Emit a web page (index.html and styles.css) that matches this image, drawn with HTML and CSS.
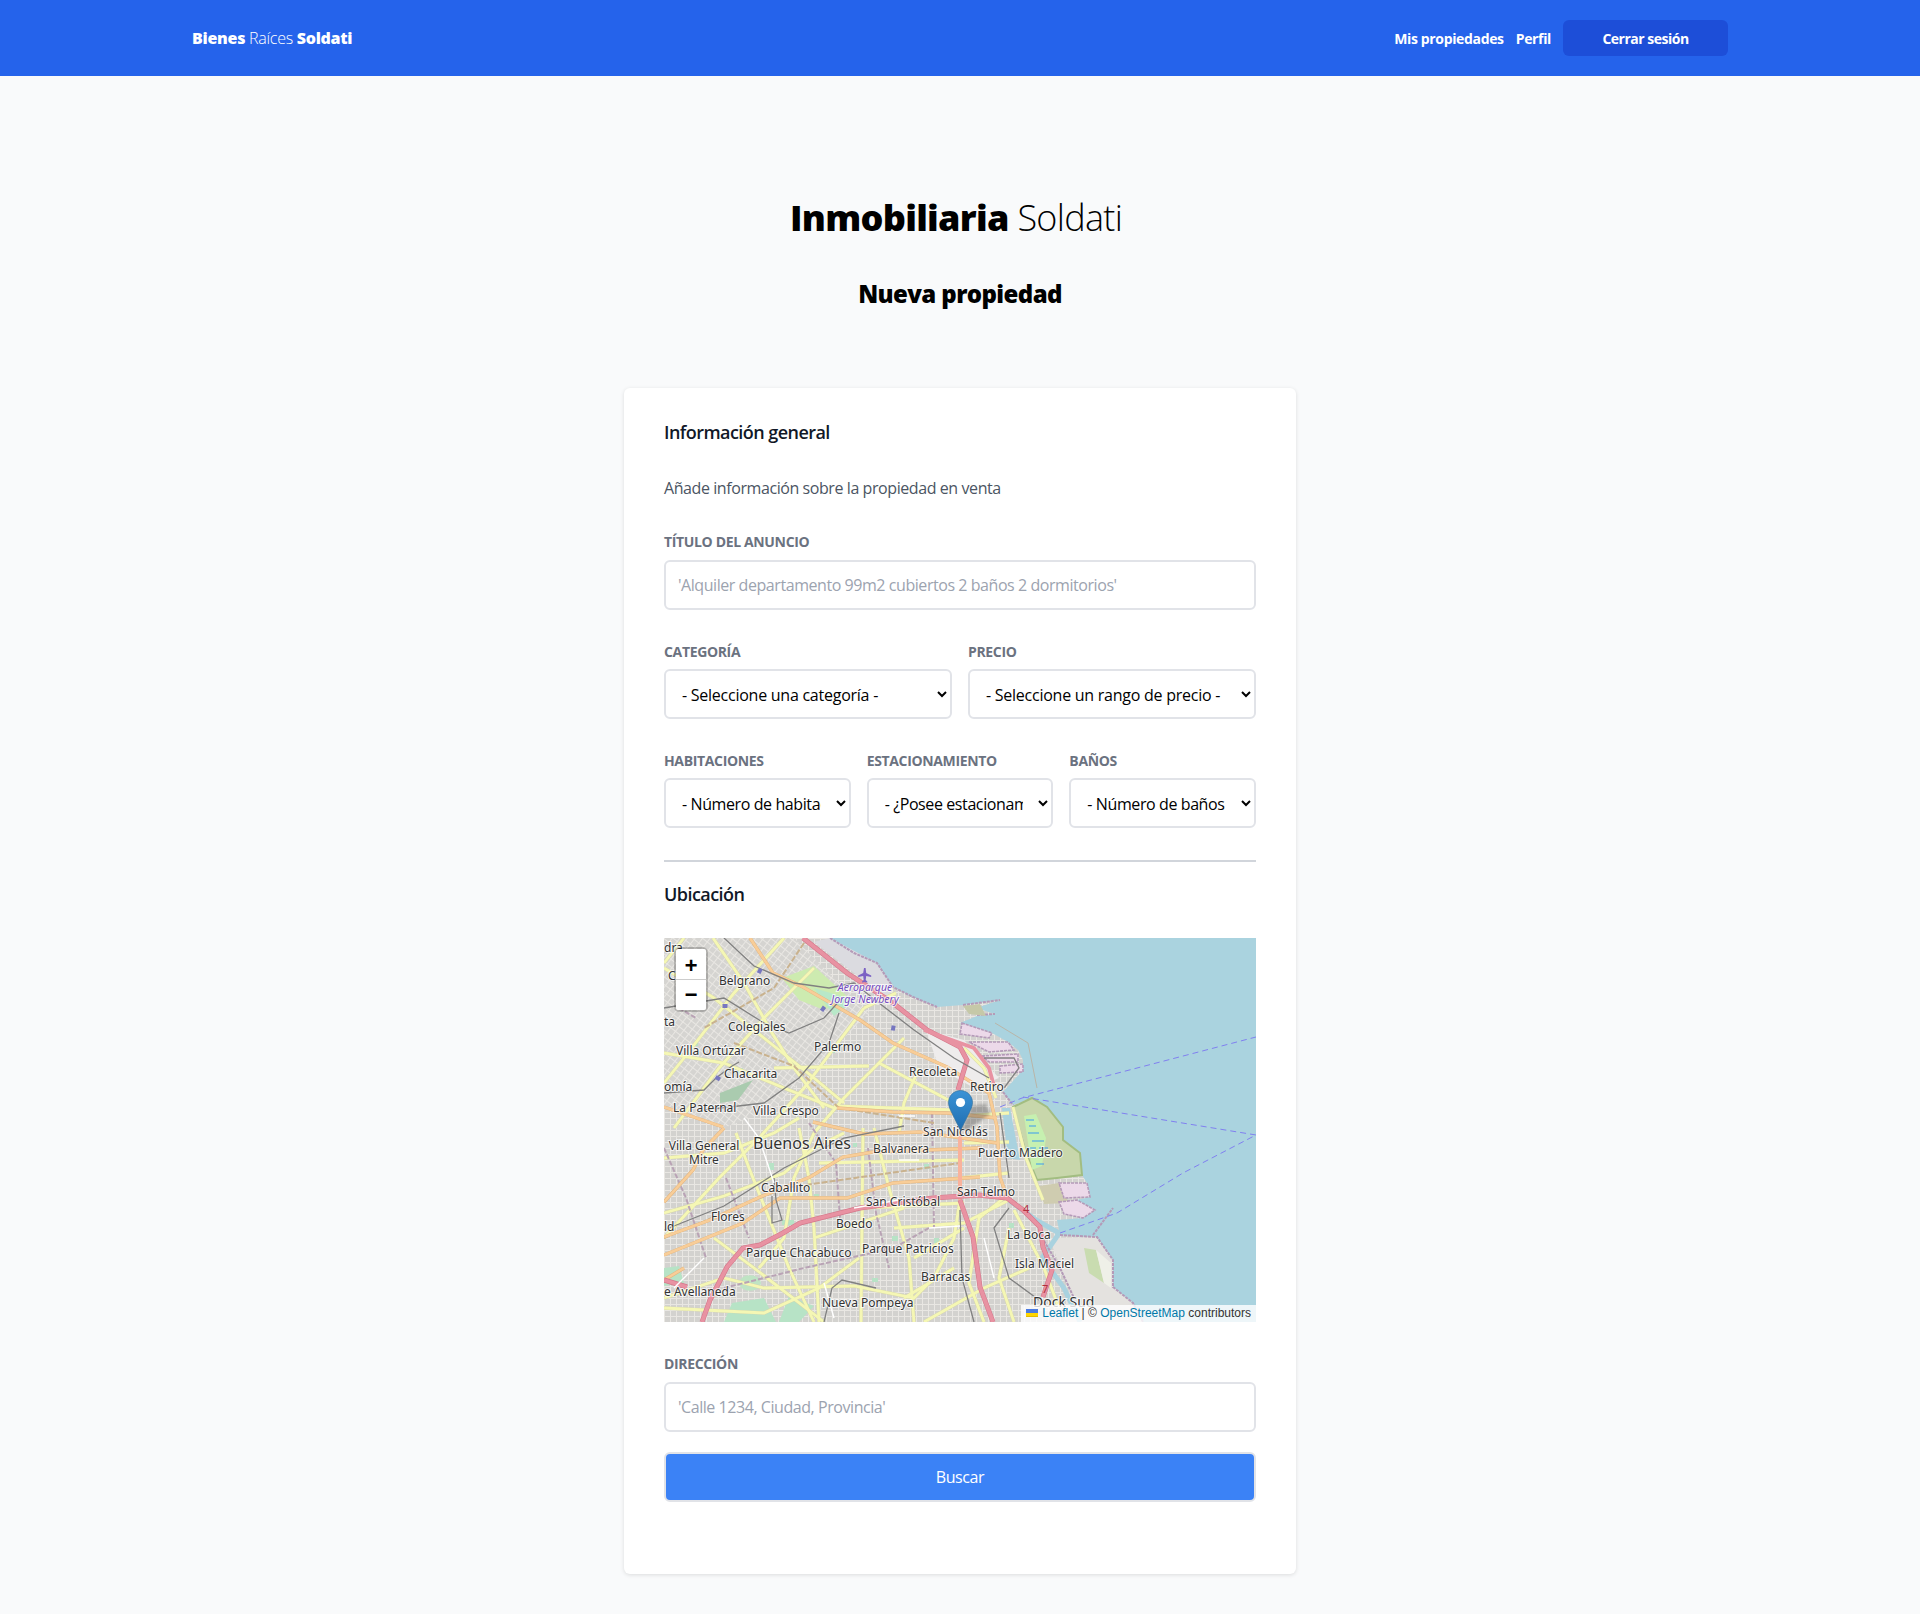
FILE: index.html
```html
<!DOCTYPE html>
<html lang="es">
<head>
  <meta charset="UTF-8">
  <title>Nueva propiedad</title>
  <link rel="stylesheet" href="styles.css">
</head>
<body>
  <header class="topbar">
    <a class="logo" href="#"><b>Bienes</b> Raíces <b>Soldati</b></a>
    <nav class="nav">
      <a href="#">Mis propiedades</a>
      <a href="#">Perfil</a>
      <a class="logout" href="#">Cerrar sesión</a>
    </nav>
  </header>

  <main class="page">
    <h1 class="title"><b>Inmobiliaria</b> Soldati</h1>
    <h2 class="subtitle">Nueva propiedad</h2>

    <form class="card">
      <h3 class="heading">Información general</h3>
      <p class="intro">Añade información sobre la propiedad en venta</p>

      <div class="field first">
        <label>Título del anuncio</label>
        <input type="text" placeholder="'Alquiler departamento 99m2 cubiertos 2 baños 2 dormitorios'">
      </div>

      <div class="row two">
        <div class="field">
          <label>Categoría</label>
          <select><option>- Seleccione una categoría -</option></select>
        </div>
        <div class="field">
          <label>Precio</label>
          <select><option>- Seleccione un rango de precio -</option></select>
        </div>
      </div>

      <div class="row three">
        <div class="field">
          <label>Habitaciones</label>
          <select><option>- Número de habitaciones -</option></select>
        </div>
        <div class="field">
          <label>Estacionamiento</label>
          <select><option>- ¿Posee estacionamiento? -</option></select>
        </div>
        <div class="field">
          <label>Baños</label>
          <select><option>- Número de baños -</option></select>
        </div>
      </div>

      <hr class="divider">
      <h3 class="heading">Ubicación</h3>

      <div class="map">
        <svg class="tiles" viewBox="0 0 592 384" width="592" height="384">
          <defs>
            <pattern id="grid" width="6" height="6" patternUnits="userSpaceOnUse">
              <rect width="6" height="6" fill="#d3d2cf"/>
              <path d="M0 .5H6M.5 0V6" stroke="#e9e7e3" stroke-width="1"/>
            </pattern>
            <pattern id="gridTurned" width="6" height="6" patternUnits="userSpaceOnUse" patternTransform="rotate(38)">
              <rect width="6" height="6" fill="#d5d4d1"/>
              <path d="M0 .5H6M.5 0V6" stroke="#e9e7e3" stroke-width="1"/>
            </pattern>
            <filter id="soft"><feGaussianBlur stdDeviation="1.8"/></filter>
            <filter id="tileBlur" x="0" y="0" width="100%" height="100%"><feGaussianBlur stdDeviation=".35"/></filter>
            <g id="yellowRoads">
              <path d="M49 0L80 45L108 95L130 130L160 170"/>
              <path d="M0 30L50 60L100 100L150 140L180 165"/>
              <path d="M20 0L0 25"/>
              <path d="M120 0L70 55L20 120L0 145"/>
              <path d="M150 30L100 80L55 130L10 190"/>
              <path d="M200 70L140 150L95 200L55 240L0 300"/>
              <path d="M240 100L180 160L150 195"/>
              <path d="M110 130L205 128"/>
              <path d="M0 115L60 125L120 150L170 170"/>
              <path d="M215 125L290 165"/>
              <path d="M255 130L240 165L235 195"/>
              <path d="M200 70L232 55"/>
              <path d="M170 168L290 172"/>
              <path d="M199 190L197 384"/>
              <path d="M0 275L60 258L120 235L150 210L180 195"/>
              <path d="M72 195L85 230L105 280L125 330L150 384"/>
              <path d="M135 190L145 240L150 290L155 384"/>
              <path d="M210 190L225 250L245 320L250 384"/>
              <path d="M296 262L290 300L270 340L250 360L190 348L100 350L60 340L0 360"/>
              <path d="M150 300L240 270"/>
              <path d="M0 370L100 375L155 350L195 320"/>
              <path d="M50 300L90 330L160 384"/>
              <path d="M199 270L300 265"/>
              <path d="M0 220L60 215L110 195L135 180"/>
              <path d="M150 195L130 240L120 300L95 330"/>
              <path d="M230 290L300 285L345 262"/>
              <path d="M340 260L315 280L305 345L320 384"/>
              <path d="M345 290L335 340L350 384"/>
              <path d="M350 272L380 330L395 370"/>
              <path d="M300 178L345 175"/>
              <path d="M300 205L345 204"/>
              <path d="M296 240L345 235"/>
              <path d="M349 169L362 220L379 262"/>
              <path d="M155 225L300 222"/>
              <path d="M250 320L300 290"/>
              <path d="M260 384L320 350L365 330"/>
              <path d="M240 360L290 330"/>
              <path d="M300 110L320 130L332 160"/>
            </g>
            <g id="orangeRoads">
              <path d="M86 0L109 35L139 49L196 82L229 105L283 129L325 155L333 189L336 239L343 259"/>
              <path d="M173 170L229 174L283 175L333 180"/>
              <path d="M149 184L200 196L256 194L333 205"/>
              <path d="M0 299L46 282L96 259L146 239L179 219L209 214L316 210"/>
              <path d="M0 317L79 285L116 260L183 260L229 245L316 239"/>
              <path d="M0 264L29 232L39 212L60 190"/>
              <path d="M0 169L59 189"/>
              <path d="M0 342L20 330"/>
            </g>
          </defs>

          <g filter="url(#tileBlur)">
            <rect width="592" height="384" fill="#aad3df"/>
            <path class="land" fill="url(#grid)" d="M0 0H166L190 15L213 25L229 49L249 59L273 69L299 67L336 62L312 70L331 76L313 78L296 85L328 95L344 104L354 112L359 122L359 132L339 154L349 167L368 160L383 169L399 189L399 202L416 215L418 237L423 245L426 259L413 262L431 272L419 280L393 282L396 297L433 299L449 322L449 349L469 365L479 384H0Z"/>
            <path fill="url(#gridTurned)" d="M0 0H130L205 75L110 170L60 190L0 170Z"/>
            <!-- parks, airport, port -->
            <path fill="#dbdbe0" d="M166 0L213 25L229 49L224 60L190 35L150 4Z"/>
            <path fill="#cdebb0" d="M118 40L150 28L185 60L160 72L135 62Z"/>
            <path fill="#b8e8c8" d="M150 50L190 62L170 78Z"/>
            <path fill="#aacbaf" d="M56 155L89 142L74 162L56 165Z"/>
            <path class="dock" d="M298 85L328 95L325 100L296 96ZM305 104L344 104L350 112L325 114ZM318 118L354 116L354 124L325 124ZM336 128L359 126L359 134L336 135Z"/>
            <path class="pier" d="M299 67L336 62M313 77L331 76"/>
            <path fill="#c5c8a8" d="M299 68L316 66L322 78L305 76Z"/>
            <path fill="#eeecec" d="M262 92L300 102L335 140L310 150L275 130Z"/>
            <path fill="#c8d7ab" stroke="#a2bd81" stroke-width="2" d="M349 169L368 160L383 169L399 189L399 202L416 215L418 237L393 240L373 242L362 215Z"/>
            <path fill="#c6f0b0" d="M360 178L372 176L382 200L378 228L368 232Z"/>
            <path stroke="#3a9cf0" stroke-width="1" d="M362 182H370M365 188H372M364 195H375M368 203H380M362 210H372M375 210H384M368 218H378M372 226H380"/>
            <path fill="#cfccb0" d="M375 248L395 245L405 265L380 266Z"/>
            <path class="dock" d="M395 245L423 245L426 259L400 260ZM395 264L413 262L431 272L419 280L400 276Z"/>
            <path fill="#e4e2df" d="M385 300L433 299L449 322L449 349L469 365L479 384H400L405 350Z"/>
            <path fill="#c9dcb0" d="M420 310L432 312L440 345L425 335Z"/>
            <path fill="#eff0e8" d="M432 312L447 325L447 350L440 345Z"/>
            <path fill="#a9d2df" d="M338 170L346 170L356 222L344 220Z"/>
            <path class="road" stroke="#a9d2df" stroke-width="5" d="M345 262L372 282L395 295L392 300L378 320L400 350L416 384"/>
            <path class="pier" d="M166 0L190 15L213 25L229 49L249 59L273 69M339 154L349 167M396 297L433 299L449 322L449 349L469 365L479 384M376 296L396 330L410 360M429 297L449 270"/>
            <path fill="#bfe4c4" d="M75 345a10 7 0 1 0 22 0a10 7 0 1 0 -22 0Z"/>
            <path fill="#b7e3c6" d="M0 330L15 328L20 345L0 348ZM68 365L100 360L112 384H60ZM125 358L150 368L135 384H115Z"/>
            <path fill="#b7e3c6" d="M74 130h5v5h-5zM105 225h5v7h-5zM189 205h4v4h-4zM166 110h5v5h-5zM228 298h6v5h-6zM270 300h5v5h-5zM208 340h6v4h-6zM30 104h4v4h-4zM118 282h12v5h-12zM150 256h5v5h-5zM296 340h5v4h-5zM260 226h5v5h-5zM345 285h5v5h-5z"/>

            <!-- roads, casing first -->
            <use href="#yellowRoads" class="road" stroke="#d6d6ac" stroke-width="3.6"/>
            <use href="#yellowRoads" class="road" stroke="#f5f7b4" stroke-width="2.8"/>
            <path class="road" stroke="#b9a3b5" stroke-width="2" stroke-dasharray="5 2" d="M15 70L32 80M0 210L22 260L42 320M62 240L85 300M145 185L172 225L176 280M204 210L212 275L225 330M268 175L270 290M265 290L230 310L140 330L60 350"/>
            <path class="road" stroke="#c9b28e" stroke-width="2" stroke-dasharray="6 2" d="M70 105L130 128L175 170L270 185M0 300L120 250L296 225M140 5L110 50L40 90"/>
            <use href="#orangeRoads" class="road" stroke="#e3b47c" stroke-width="3.4"/>
            <use href="#orangeRoads" class="road" stroke="#f8cd98" stroke-width="2.6"/>
            <path class="road" stroke="#f9b29c" stroke-width="4" d="M296 165L296 262"/>
            <path class="road" stroke="#d4788b" stroke-width="5" d="M0 342L23 349M314 257L269 260L196 270L136 285L119 295L96 307L79 310L63 329L46 362L38 384M314 257L343 260L359 272L376 289L379 309L388 332L379 359M296 262L309 299L316 349L329 384M139 0L183 35L229 65L263 92L296 109L303 122L294 152"/>
            <path class="road" stroke="#e892a2" stroke-width="3.8" d="M0 342L23 349M314 257L269 260L196 270L136 285L119 295L96 307L79 310L63 329L46 362L38 384M314 257L343 260L359 272L376 289L379 309L388 332L379 359M296 262L309 299L316 349L329 384M139 0L183 35L229 65L263 92L296 109L303 122L294 152M260 92L310 110L325 130L330 148"/>
            <path class="road" stroke="#808080" stroke-width="1.3" d="M60 0L90 28L130 45L165 50L190 45L215 65L250 92L290 120L325 140M0 70L60 60L100 85L125 95L160 80L178 60M0 155L40 152L52 140L68 128L75 124M40 172L100 165L135 140L165 105L175 75M0 292L60 268L120 230L180 200L240 188M110 240L112 262L118 282L108 285L108 258M296 272L298 340L310 384M336 175L345 240M320 120L350 120L355 130L340 150M160 384L168 350L178 342L212 350M345 270L330 290L345 340L375 362"/>
            <path class="road" stroke="#7777c0" stroke-width="5" stroke-dasharray="4 70" d="M94 32L127 48L172 80L246 93M61 66L60 130L42 160"/>
            <path class="road" stroke="#fff" stroke-width="1.4" d="M235 178h16M235 222h20M190 270L235 262M265 290L296 288M160 345L170 380M10 350L40 320M80 180L95 200L110 245M320 300L330 340"/>

            <!-- limits over the water -->
            <path class="road" stroke="#8080f0" stroke-dasharray="6 4" d="M336 169L358 160L592 99M359 159L592 197L519 235L453 275L396 295"/>
            <path class="road" stroke="#b9b5a8" d="M331 85L364 105L373 150"/>

            <path fill="#7b62c4" d="M200 30l1.6 0l.6 5l5 2.4l0 1.6l-5-1l-.5 4l1.6 1.6l0 1l-2.6-.6l-2.6 .6l0-1l1.6-1.6l-.5-4l-5 1l0-1.6l5-2.4Z"/>
          </g>

          <text class="lbl" x="55" y="47">Belgrano</text>
          <text class="lbl air" x="201" y="53" text-anchor="middle">Aeroparque</text>
          <text class="lbl air" x="201" y="65" text-anchor="middle">Jorge Newbery</text>
          <text class="lbl" x="64" y="93">Colegiales</text>
          <text class="lbl" x="12" y="117">Villa Ortúzar</text>
          <text class="lbl" x="150" y="113">Palermo</text>
          <text class="lbl" x="245" y="138">Recoleta</text>
          <text class="lbl" x="60" y="140">Chacarita</text>
          <text class="lbl" x="0" y="153">omía</text>
          <text class="lbl" x="9" y="174">La Paternal</text>
          <text class="lbl" x="89" y="177">Villa Crespo</text>
          <text class="lbl" x="306" y="153">Retiro</text>
          <text class="lbl" x="259" y="198">San Nicolás</text>
          <text class="lbl" x="314" y="219">Puerto Madero</text>
          <text class="lbl" x="209" y="215">Balvanera</text>
          <text class="lbl big" x="89" y="211">Buenos Aires</text>
          <text class="lbl" x="40" y="212" text-anchor="middle">Villa General</text>
          <text class="lbl" x="40" y="226" text-anchor="middle">Mitre</text>
          <text class="lbl" x="97" y="254">Caballito</text>
          <text class="lbl" x="47" y="283">Flores</text>
          <text class="lbl" x="0" y="293">ld</text>
          <text class="lbl" x="202" y="268">San Cristóbal</text>
          <text class="lbl" x="293" y="258">San Telmo</text>
          <text class="lbl" x="172" y="290">Boedo</text>
          <text class="lbl" x="82" y="319">Parque Chacabuco</text>
          <text class="lbl" x="198" y="315">Parque Patricios</text>
          <text class="lbl" x="343" y="301">La Boca</text>
          <text class="lbl" x="351" y="330">Isla Maciel</text>
          <text class="lbl" x="257" y="343">Barracas</text>
          <text class="lbl" x="0" y="358">e Avellaneda</text>
          <text class="lbl" x="158" y="369">Nueva Pompeya</text>
          <text class="lbl sud" x="369" y="369">Dock Sud</text>
          <text class="lbl" x="0" y="14">dra</text>
          <text class="lbl" x="4" y="42">C</text>
          <text class="lbl" x="0" y="88">ta</text>
          <text class="shield" x="359" y="275">4</text>
          <text class="shield" x="378" y="355">7</text>
        </svg>

        <svg class="pin" viewBox="0 0 60 41" width="60" height="41">
          <defs>
            <linearGradient id="pinFill" x1="0" y1="0" x2="0" y2="1">
              <stop offset="0" stop-color="#3b93d6"/>
              <stop offset="1" stop-color="#1f6db0"/>
            </linearGradient>
          </defs>
          <path d="M13 40L24 16L38 14L42 24L20 40Z" fill="#444" opacity=".35" filter="url(#soft)"/>
          <path fill="url(#pinFill)" stroke="#2e6c97" stroke-width=".6" d="M12.5 .5C5.9 .5 .5 5.9 .5 12.5c0 2.3 .8 5.2 2.3 8.3L12.5 40.5L22.2 20.8c1.5-3.1 2.3-6 2.3-8.3C24.5 5.9 19.1 .5 12.5 .5Z"/>
          <circle cx="12.5" cy="12.5" r="4.6" fill="#fff"/>
        </svg>

        <div class="zoom">
          <a href="#">+</a>
          <a href="#">&#8722;</a>
        </div>

        <div class="attribution">
          <svg class="flag" viewBox="0 0 12 8" width="12" height="8"><rect width="12" height="4" fill="#4C7BE1"/><rect y="4" width="12" height="3" fill="#FFD500"/><rect y="7" width="12" height="1" fill="#E0BC00"/></svg>
          <a href="#">Leaflet</a> | © <a href="#">OpenStreetMap</a> contributors
        </div>
      </div>

      <div class="field address">
        <label>Dirección</label>
        <input type="text" placeholder="'Calle 1234, Ciudad, Provincia'">
      </div>

      <button class="search" type="button">Buscar</button>
    </form>
  </main>
</body>
</html>
```

FILE: styles.css
```css
* {
  box-sizing: border-box;
}

body {
  margin: 0;
  background: #f9fafb;
  font-family: "Open Sans", sans-serif;
  color: #000;
}

a {
  text-decoration: none;
}

.topbar {
  display: flex;
  justify-content: space-between;
  align-items: center;
  height: 76px;
  padding: 0 192px;
  background: #2563eb;
}

.logo {
  color: #fff;
  font-size: 16px;
  font-weight: 300;
  letter-spacing: -0.27px;
}

.logo b {
  font-weight: 800;
}

.nav {
  display: flex;
  align-items: center;
  gap: 12px;
}

.nav a {
  color: #fff;
  font-size: 14px;
  font-weight: 700;
  letter-spacing: -0.35px;
}

.nav .logout {
  display: flex;
  justify-content: center;
  align-items: center;
  width: 165px;
  height: 36px;
  border-radius: 6px;
  background: #1d4ed8;
  letter-spacing: -0.5px;
}

.page {
  padding-top: 122px;
}

.title {
  margin: 0;
  padding-right: 8px;
  text-align: center;
  font-size: 36px;
  line-height: 40px;
  font-weight: 300;
  letter-spacing: -0.7px;
}

.title b {
  font-weight: 800;
}

.subtitle {
  margin: 40px 0 0;
  text-align: center;
  font-size: 24px;
  line-height: 32px;
  font-weight: 800;
  letter-spacing: -0.6px;
}

.card {
  width: 672px;
  margin: 78px auto 40px;
  padding: 30px 40px 72px;
  border-radius: 6px;
  background: #fff;
  box-shadow: 0 1px 4px rgba(0, 0, 0, 0.12);
}

.heading {
  margin: 0;
  font-size: 18px;
  line-height: 28px;
  font-weight: 600;
  color: #111827;
  letter-spacing: -0.55px;
}

.intro {
  margin: 30px 0 0;
  font-size: 16px;
  line-height: 24px;
  color: #4b5563;
  letter-spacing: -0.42px;
}

.field label {
  display: block;
  margin-bottom: 8px;
  font-size: 14px;
  line-height: 20px;
  font-weight: 700;
  text-transform: uppercase;
  color: #6b7280;
  letter-spacing: -0.35px;
}

.row .field label {
  margin-bottom: 7px;
}

.field input,
.field select {
  display: block;
  width: 100%;
  height: 50px;
  padding: 12px;
  border: 2px solid #e1e3e8;
  border-radius: 6px;
  background: #fff;
  font: inherit;
  font-size: 16px;
  line-height: 24px;
  color: #000;
}

.field input {
  letter-spacing: -0.44px;
}

.field select {
  letter-spacing: -0.25px;
}

.three .field select {
  letter-spacing: -0.4px;
}

.field input::placeholder {
  color: #9ca3af;
}

.first {
  margin-top: 32px;
}

.row {
  display: grid;
  gap: 16px;
  margin-top: 32px;
}

.two {
  grid-template-columns: 1fr 1fr;
}

.three {
  grid-template-columns: 1fr 1fr 1fr;
}

.divider {
  height: 2px;
  margin: 32px 0 18px;
  border: 0;
  background: #d1d5db;
}

.map {
  position: relative;
  height: 384px;
  margin-top: 30px;
  overflow: hidden;
  background: #aad3df;
}

.tiles {
  display: block;
}

.road,
.road path {
  fill: none;
}

.dock {
  fill: #ecd9e9;
  stroke: #b49ab8;
  stroke-width: 1.6;
  stroke-dasharray: 3 1;
}

.pier {
  fill: none;
  stroke: #b49ab8;
  stroke-width: 2;
  stroke-dasharray: 3 1;
}

.lbl {
  font-family: "Noto Sans", sans-serif;
  font-size: 12px;
  fill: #333;
  stroke: rgba(255, 255, 255, 0.75);
  stroke-width: 2px;
  paint-order: stroke;
}

.big {
  font-size: 16px;
}

.sud {
  font-size: 14px;
}

.air {
  font-size: 10.5px;
  font-style: italic;
  fill: #734ac0;
}

.shield {
  font-family: "Noto Sans", sans-serif;
  font-size: 11px;
  fill: #b0303c;
}

.pin {
  position: absolute;
  left: 284px;
  top: 152px;
}

.zoom {
  position: absolute;
  left: 10px;
  top: 9px;
  border: 2px solid rgba(0, 0, 0, 0.2);
  border-radius: 5px;
  background-clip: padding-box;
}

.zoom a {
  display: block;
  width: 30px;
  height: 30px;
  overflow: hidden;
  background: #fff;
  text-align: center;
  font: bold 22px/33px "Liberation Mono", monospace;
  color: #000;
}

.zoom a:first-child {
  height: 31px;
  line-height: 37px;
  border-bottom: 1px solid #ccc;
  border-radius: 2px 2px 0 0;
}

.zoom a:last-child {
  border-radius: 0 0 2px 2px;
}

.attribution {
  position: absolute;
  right: 0;
  bottom: 0;
  padding: 0 5px;
  background: rgba(255, 255, 255, 0.8);
  font-family: "Liberation Sans", sans-serif;
  font-size: 12px;
  line-height: 17px;
  color: #333;
}

.attribution a {
  color: #0078a8;
}

.flag {
  margin-right: 1px;
}

.address {
  margin-top: 32px;
}

.search {
  display: block;
  width: 100%;
  height: 50px;
  margin-top: 20px;
  border: 2px solid #e1e3e8;
  border-radius: 6px;
  background: #3b82f6;
  color: #fff;
  font: inherit;
  font-size: 16px;
  letter-spacing: -0.4px;
}
```
